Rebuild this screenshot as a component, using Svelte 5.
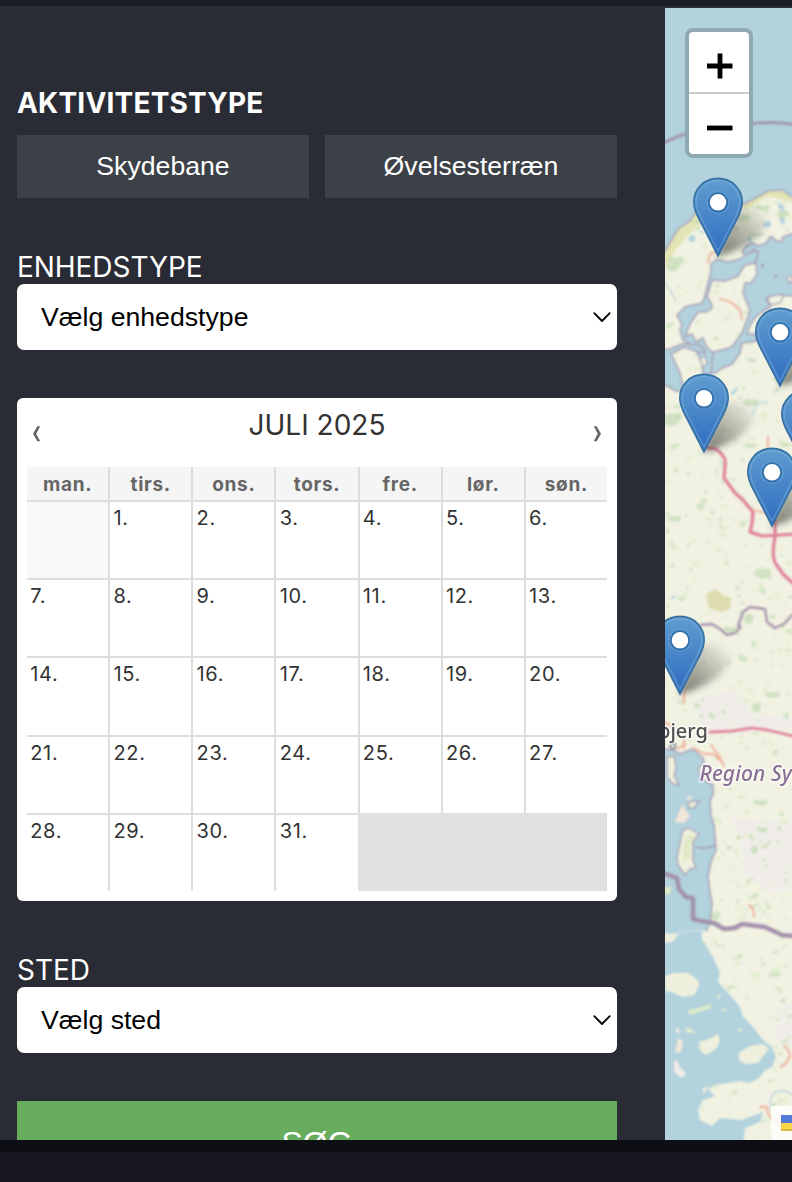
<script>
  const weekdays = ['man.', 'tirs.', 'ons.', 'tors.', 'fre.', 'lør.', 'søn.'];
  const cells = Array.from({ length: 35 }, (_, i) => i);

  const markers = [
    [718, 177], [780, 307], [704, 373], [806, 389], [772, 447], [680, 615]
  ];

  // Small woodland and heath patches scattered over the land.
  let seed = 7;
  const rnd = () => (seed = (seed * 16807) % 2147483647) / 2147483647;
  const patches = Array.from({ length: 900 }, () => ({
    x: 665 + rnd() * 127,
    y: 200 + rnd() * 940,
    a: 0.8 + rnd() * rnd() * 5,
    b: 0.7 + rnd() * 1.8,
    r: rnd() * 90 - 45,
    c: ['#d3e3c3', '#e0edce', '#cfe2c0', '#e9ecd0', '#f2eee9'][Math.floor(rnd() * 5)]
  }));

  const woods = [
    [672, 225, 8, 6], [668, 420, 13, 9], [762, 574, 9, 7], [675, 262, 8, 7],
    [750, 403, 8, 5], [772, 695, 8, 4], [756, 708, 5, 7], [730, 630, 8, 4],
    [714, 916, 6, 6], [774, 975, 6, 3], [760, 803, 8, 4], [754, 850, 4, 6],
    [750, 446, 7, 3], [700, 507, 4, 5], [674, 519, 7, 4], [762, 830, 6, 4],
    [762, 208, 8, 4], [742, 218, 8, 5], [756, 235, 7, 3], [748, 620, 5, 6],
    [782, 215, 6, 6], [672, 268, 7, 5], [700, 222, 6, 4]
  ];
</script>

<div class="screen">
  <div class="topbar"></div>
  <main>
    <section class="filters">
      <h2>AKTIVITETSTYPE</h2>
      <div class="types">
        <button>Skydebane</button>
        <button>Øvelsesterræn</button>
      </div>

      <div class="label unit">ENHEDSTYPE</div>
      <div class="select">
        <span>Vælg enhedstype</span>
        <svg width="20" height="14" viewBox="0 0 20 14"><path d="M2.3 3.2 10 11 17.7 3.2" /></svg>
      </div>

      <div class="calendar">
        <div class="cal-head">
          <svg width="10" height="18" viewBox="0 0 10 18"><path d="M5.3 1.2H8.2L4.2 8.7 8.2 16.2H5.3L1 8.7z" /></svg>
          <span>JULI 2025</span>
          <svg width="10" height="18" viewBox="0 0 10 18"><path d="M4.7 1.2H1.8L5.8 8.7 1.8 16.2H4.7L9 8.7z" /></svg>
        </div>
        <div class="grid">
          {#each weekdays as d}
            <div class="wd">{d}</div>
          {/each}
          {#each cells as i}
            <div class="day" class:before={i === 0} class:after={i > 31}>{i > 0 && i < 32 ? `${i}.` : ''}</div>
          {/each}
        </div>
      </div>

      <div class="label place">STED</div>
      <div class="select">
        <span>Vælg sted</span>
        <svg width="20" height="14" viewBox="0 0 20 14"><path d="M2.3 3.2 10 11 17.7 3.2" /></svg>
      </div>

      <button class="search">SØG</button>
    </section>

    <section class="map">
      <svg class="tiles" width="127" height="1132" viewBox="665 8 127 1132">
        <defs>
          <linearGradient id="pin" x1="0" y1="0" x2="0" y2="1">
            <stop offset="0" stop-color="#5f9dd0" />
            <stop offset="1" stop-color="#2e6cc0" />
          </linearGradient>
          <linearGradient id="shade" gradientUnits="userSpaceOnUse" x1="0" y1="78" x2="42" y2="32">
            <stop offset="0" stop-color="#3c3c36" stop-opacity=".7" />
            <stop offset=".5" stop-color="#3c3c36" stop-opacity=".36" />
            <stop offset="1" stop-color="#3c3c36" stop-opacity=".04" />
          </linearGradient>
          <filter id="soft"><feGaussianBlur stdDeviation=".85" /></filter>
          <filter id="faint"><feGaussianBlur stdDeviation=".45" /></filter>
          <filter id="blur" x="-40%" y="-40%" width="180%" height="180%"><feGaussianBlur stdDeviation="3" /></filter>
        </defs>

        <rect x="665" y="8" width="127" height="1132" fill="#f1f2e2" />
        <g filter="url(#soft)">
          <path fill="#f0ede9" d="M695 700 735 690 750 712 792 718V727L735 735 700 728zM728 817 792 822V890L770 892 745 875 740 835zM778 1010 792 1000V1045L775 1040z" />
          {#each patches as p}
            <ellipse cx={p.x} cy={p.y} rx={p.a} ry={p.b} fill={p.c} transform={`rotate(${p.r} ${p.x} ${p.y})`} />
          {/each}
          <path fill="#dcdcae" d="M706 594 716 589 724 596 731 598 730 609 721 612 709 608z" />
          <path fill="#e2e4b4" d="M665 251 678 229 692 217 702 200 708 215 690 233 676 249 665 268zM742 206 768 191 782 191 792 197V202L768 196 746 210z" />
          {#each woods as w}
            <path fill="#c5dbb7" opacity=".75" d={`M${w[0] - w[2]} ${w[1]}l${w[2] * 0.5} ${-w[3] * 0.8} ${w[2] * 0.6} ${w[3] * 0.2} ${w[2] * 0.8} ${-w[3] * 0.2} ${w[2] * 0.1} ${w[3] * 0.9} ${-w[2] * 0.6} ${w[3] * 0.6} ${-w[2] * 0.6} ${-w[3] * 0.1}z`} />
          {/each}

          <g fill="#b2d2dd" stroke="#a79fb5" stroke-width="1.5" stroke-linejoin="round">
            <path d="M660 255 665 251 678 229 690 221 702 203 730 212 742 205 752 200 768 191 782 190 792 197 798 200V0H660z" />
            <path d="M798 232 783 237 781 242 775 240 771 236 766 243 759 246 752 243 745 247 742 252 747 256 753 249 758 251 756 262 757 275 751 283 745 283 743 293 750 310 748 317 742 333 732 347 722 350 710 353 706 362 704 373 716 373 720 369 732 364 740 353 742 343 757 341 755 334 747 334 750 325 754 319 760 313 770 307 766 298 776 295 798 296z" />
            <path d="M717 259 728 262 740 259 747 254 754 251 758 254 755 263 745 265 741 271 738 276 725 281 712 280 707 297 711 303 712 308 706 312 698 312 690 324 685 337 692 334 696 342 703 338 706 346 713 353 711 374 703 374 702 364 696 350 690 344 683 340 680 330 682 325 677 315 685 307 702 303 705 296 707 287 711 272 711 264z" />
            <path d="M660 350 670 349 682 344 700 345 706 353 695 351 684 347 671 354 680 373 684 391 676 391 660 382z" />
            <path d="M655 748 673 750 680 754 693 749 703 758 704 762 698 769 700 776 705 781 713 785 713 795 710 800 711 815 714 825 716 850 711 861 708 877 710 893 712 903 710 922 707 930H655z" />
          </g>
          <path fill="#f1f2e2" stroke="#a79fb5" stroke-width="1.3" d="M700 359 705 356 707 364 703 367zM787 277 790 275 793 280 789 283zM767 298 776 295 784 295 780 303 771 305z" />
          <path fill="#a79fb5" d="M774 275h3v3h-3zM761 264h3v3h-3z" />
          <path fill="#b2d2dd" d="M655 926H710L702 932 702 940 713 957 720 973 718 982 730 995 740 1007 743 1017 753 1027 763 1040 772 1047 776 1057 772 1067 764 1071 760 1077 750 1083 740 1081 713 1085 708 1089 715 1096 703 1100 698 1110 700 1120 712 1126 720 1118 742 1120 763 1112 760 1122 745 1128 743 1145H655z" />
          <path fill="#b2d2dd" d="M688 238l5-4 3 5-5 4zM778 202l6 4 0 6-5-3zM780 217l5 2-1 6-4-3zM762 223l8-2 1 5-6 2zM747 237l4 0 1 6-4-2zM732 391l7-5-3 6-5 4zM670 597l8-2-5 4zM699 231l5 0-2 3z" />

          <g fill="#eef0dd">
            <path stroke="#a79fb5" stroke-width="1.4" d="M667 757 674 756 676 767 674 776 679 785 673 784 667 777zM688 802 699 801 694 808 689 808zM683 830 688 828 699 834 693 842 693 860 696 868 690 869 685 875 678 865 677 857 680 843z" />
            <path fill="#f2e7d9" d="M675 822 682 805 690 816 684 823zM675 1053 678 1038 683 1041 681 1052zM686 798l7-3-4 6z" />
            <path d="M665 976 674 973 688 973 698 980 699 986 694 995 682 997 672 992 665 991zM699 1042 709 1039 718 1034 720 1040 716 1049 706 1055 700 1051zM739 1053 750 1046 763 1044 769 1049 763 1056 758 1063 745 1064 739 1060z" />
            <path fill="#f1ece8" d="M674 1062 677 1060 680 1068 686 1073 682 1078 674 1072zM675 1031 678 1027 680 1034z" />
            <path fill="#dcebcb" d="M688 1010 695 1009 711 1004 711 1008 700 1012 690 1015zM684 1028 690 1028 696 1033 688 1033zM716 997 722 993 719 999zM721 1010l4-2 1 4zM737 1029l5 0-1 4z" />
            <path d="M660 933 679 934 672 942 660 943zM702 1089 708 1086 704 1094z" />
          </g>
          <path fill="#dfe9c5" d="M688 834 696 836 690 845 690 858 683 861 683 846zM660 886l12 2-3 7-9-3z" />

          <g fill="none" stroke-linecap="round" stroke-linejoin="round">
            <path stroke="#a391ac" stroke-width="3.2" d="M660 145Q672 138 686 134 714 126 745 125 768 120 798 125" />
            <path stroke="#a994ae" stroke-width="2.4" d="M700 625 712 624 720 629 727 635 735 633 741 627 738 626 743 612 750 607 765 609 767 622 775 628 784 624 792 615" />
            <path stroke="#a391ac" stroke-width="4.6" d="M660 872 677 878 679 889 686 897 693 898 693 919 701 921 714 923 724 929 735 928 742 924 765 927 782 935 795 936" />
            <path stroke="#a994ae" stroke-width="1.5" d="M696 847Q706 850 716 845" />
            <path stroke="#dfe8e0" stroke-width="1" d="M679 932 704 930" />
            <path stroke="#df7f99" stroke-width="3.2" d="M704 447 716 449Q727 457 725 465L724 478 735 493 742 499 753 512 752 524 750 532 762 536 798 534M775 520V537Q771 556 776 564L783 574 797 587" />
            <path stroke="#df7f99" stroke-width="2.8" d="M710 732 732 731 752 728 768 730 797 737" />
            <path stroke="#f0aa99" stroke-width="1.8" d="M720 299 731 302 740 310 742 319M708 263 710 254 716 251M768 437V448M684 690V703M684 738V748M665 722 673 727M678 749 685 744M693 748 705 754 714 754 719 760M711 745 719 756 724 766M749 905Q755 910 754 917M784 1046Q797 1056 781 1067M760 1107H767L768 1114 782 1128M755 510 765 513" />
            <path stroke="#b8d3da" stroke-width="1.4" d="M665 282 676 300M752 415 758 403 767 402M771 1110C767 1088 783 1088 792 1095" />
          </g>
          <circle cx="673" cy="746" r="2.6" fill="#fff" stroke="#666" stroke-width="1.5" />
        </g>

        <g filter="url(#faint)" font-family="Noto Sans" paint-order="stroke" stroke="#fff" stroke-opacity=".6" stroke-width="3.5" stroke-linejoin="round">
          <text x="708" y="738" text-anchor="end" font-size="20" font-weight="500" fill="#504f52">Esbjerg</text>
          <text x="699.5" y="781" font-size="21" font-style="italic" font-weight="500" letter-spacing=".1" fill="#8a7094">Region Syddanmark</text>
        </g>

        {#each markers as m}
          <path transform={`translate(${m[0]} ${m[1]})`} fill="url(#shade)" filter="url(#blur)" d="M-1 79C8 60 12 44 20 32 32 26 46 30 49 42 50 58 22 75 -1 79z" />
        {/each}
        {#each markers as m}
          <g transform={`translate(${m[0]} ${m[1]})`}>
            <path fill="url(#pin)" stroke="#3872a4" stroke-width="1.6" d="M0 1.4C-14 1.4-24.2 12-24.2 25-24.2 31.5-21.5 37.5-18.5 43L0 79 18.5 43C21.5 37.5 24.2 31.5 24.2 25 24.2 12 14 1.4 0 1.4z" />
            <path fill="none" stroke="#8bb8df" stroke-opacity=".4" stroke-width="1.5" d="M0 3.8C-12.5 3.8-21.8 13.3-21.8 25-21.8 30.5-19.3 36.5-16.3 42L0 74 16.3 42C19.3 36.5 21.8 30.5 21.8 25 21.8 13.3 12.5 3.8 0 3.8z" />
            <circle cy="25.3" r="11" fill="none" stroke="#6ba3d6" stroke-opacity=".5" stroke-width="1.5" />
            <circle cy="25.3" r="9.2" fill="#fff" stroke="#336fa8" stroke-width="1.8" />
          </g>
        {/each}
      </svg>

      <div class="zoom">
        <div><svg width="26" height="26" viewBox="0 0 26 26"><path d="M0 13H25.5M13 .5V25.5" /></svg></div>
        <div><svg width="26" height="26" viewBox="0 0 26 26"><path d="M0 13H25.5" /></svg></div>
      </div>
      <div class="credit"><i></i></div>
    </section>
  </main>
  <footer></footer>
</div>

<style>
  :global(body) { margin: 0; background: #171720; overflow: hidden; }
  .screen {
    width: 792px; height: 1182px; display: flex; flex-direction: column;
    background: #171720; overflow: hidden; font-family: Inter, sans-serif;
  }
  .topbar { height: 6px; flex: none; background: #1a1d25; }
  main { height: 1134px; flex: none; display: flex; background: #2a2c35; overflow: hidden; }
  footer { height: 12px; background: #0e0f14; }
  .filters { box-sizing: border-box; width: 665px; padding: 80px 48px 0 17px; flex: none; }
  h2 { margin: 0; height: 49px; line-height: 34px; font-size: 28px; font-weight: 700; letter-spacing: .2px; color: #fff; }
  .types { display: grid; grid-template-columns: 1fr 1fr; gap: 16px; }
  button {
    display: block; padding: 0; border: 0; border-radius: 0; height: 63px; background: #3c4047; color: #fff;
    font: 26.67px/63px "Liberation Sans", sans-serif;
  }
  .label { height: 34px; line-height: 35px; font-size: 28px; letter-spacing: -.05px; color: #fff; }
  .unit { margin-top: 52px; }
  .place { margin-top: 52px; }
  .select {
    box-sizing: border-box; height: 66px; padding: 0 5px 0 24px; border-radius: 7px; background: #fff; color: #000;
    display: flex; align-items: center; justify-content: space-between;
    font: 26.67px "Liberation Sans", sans-serif;
  }
  .select path { fill: none; stroke: #000; stroke-width: 1.8; stroke-linecap: round; stroke-linejoin: round; }
  .calendar { box-sizing: border-box; height: 503px; margin-top: 48px; padding: 0 10px 10px; border-radius: 6px; background: #fff; }
  .cal-head { display: flex; justify-content: space-between; height: 69px; padding: 0 5px; color: #333; font-size: 28px; line-height: 55px; }
  .cal-head svg { margin-top: 27px; }
  .cal-head path { fill: #666; }
  .grid { display: grid; grid-template-columns: 81.2px repeat(6, 83.13px); grid-template-rows: 33px repeat(5, 78.2px); }
  .wd, .day { box-sizing: border-box; border-left: 2px solid #ddd; }
  .wd:nth-child(7n + 1), .day:nth-child(7n + 1) { border-left: 0; }
  .wd { background: #f5f5f5; color: #666; font-size: 19px; font-weight: 700; line-height: 36px; letter-spacing: .7px; text-align: center; }
  .day { border-top: 2px solid #ddd; padding-left: 3.2px; color: #333; font-size: 20px; line-height: 32.8px; letter-spacing: .7px; }
  .before { background: #f9f9f9; }
  .after { background: #e0e0e0; border-color: #e0e0e0; }
  .search { width: 600px; height: 84px; margin-top: 48px; background: #68ac5d; font: 32px/84px "Liberation Sans", sans-serif; }
  .map { position: relative; width: 127px; height: 1132px; margin-top: 2px; flex: none; overflow: hidden; }
  .tiles { display: block; }
  .zoom {
    position: absolute; left: 20px; top: 20px; width: 60px; border: 4px solid #8fa9b2; border-radius: 8px;
    background: #fff; background-clip: padding-box;
  }
  .zoom div { height: 60px; display: flex; align-items: center; justify-content: center; }
  .zoom div + div { border-top: 2px solid #ccc; }
  .zoom svg { transform: translate(1px, 4px); }
  .zoom path { stroke: #000; stroke-width: 4.8; }
  .credit { position: absolute; left: 106px; bottom: 0; width: 21px; height: 34px; background: rgba(255, 255, 255, .8); }
  .credit i { display: block; width: 24px; height: 16px; margin: 9px 0 0 10px; background: linear-gradient(#547bdc 50%, #f8d648 50% 88%, #d9b83c 88%); }
</style>
